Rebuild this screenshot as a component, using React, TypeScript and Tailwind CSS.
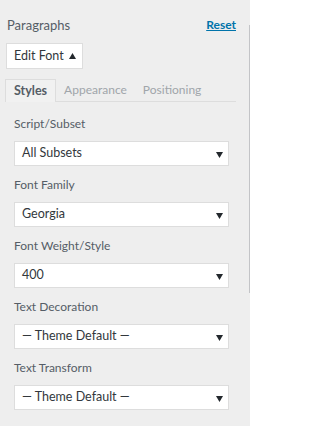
const fields = [
  { label: "Script/Subset", value: "All Subsets" },
  { label: "Font Family", value: "Georgia" },
  { label: "Font Weight/Style", value: "400" },
  { label: "Text Decoration", value: "— Theme Default —" },
  { label: "Text Transform", value: "— Theme Default —" },
];

const tabs = ["Styles", "Appearance", "Positioning"];

function SelectBox({ value }: { value: string }) {
  return (
    <div className="flex h-[25px] items-center justify-between border border-[#dddddd] bg-white pl-[7px] pr-[5px] text-[12.5px] text-[#32373c]">
      <span>{value}</span>
      <svg width="7" height="7" viewBox="0 0 7 7" className="mt-px shrink-0">
        <path d="M0 1h7L3.5 7z" fill="#23282d" />
      </svg>
    </div>
  );
}

export default function App() {
  return (
    <div
      className="relative h-[426px] w-[250px] overflow-hidden bg-[#eeeeee] text-[#555d66]"
      style={{ fontFamily: 'Lato, "Liberation Sans", sans-serif' }}
    >
      <div className="absolute right-0 top-[25px] h-[268px] w-px bg-[#c3c4c7]" />

      <div className="flex items-center justify-between pl-[7px] pr-[14px] pt-[15px]">
        <span className="text-[13px] leading-[20px]">Paragraphs</span>
        <a href="#" className="text-[12px] font-bold text-[#0073aa] underline">
          Reset
        </a>
      </div>

      <button className="ml-[6px] mt-[8px] flex h-[26px] w-[77px] items-center justify-between whitespace-nowrap border border-[#dddddd] bg-white pl-[7px] pr-[6px] text-[12.5px] text-[#32373c]">
        <span>Edit Font</span>
        <svg width="7" height="6" viewBox="0 0 7 6" className="shrink-0">
          <path d="M3.5 0L7 6H0z" fill="#23282d" />
        </svg>
      </button>

      <div className="ml-[5px] mr-[14px] mt-[10px] flex border-b border-[#dddddd] text-[12px]">
        {tabs.map((tab, index) =>
          index === 0 ? (
            <div
              key={tab}
              className="-mb-px flex h-[23px] items-center border border-b-0 border-[#dddddd] bg-[#f1f1f1] px-[8px] text-[12.5px] font-bold text-[#555d66]"
            >
              {tab}
            </div>
          ) : (
            <div key={tab} className="flex h-[22px] items-center px-[8px] text-[#a0a5aa]">
              {tab}
            </div>
          ),
        )}
      </div>

      <div className="pl-[14px] pr-[21px] pt-[3px]">
        {fields.map((field) => (
          <div key={field.label}>
            <div className="mb-[8px] mt-[10px] text-[12px] leading-[18px]">{field.label}</div>
            <SelectBox value={field.value} />
          </div>
        ))}
      </div>
    </div>
  );
}
